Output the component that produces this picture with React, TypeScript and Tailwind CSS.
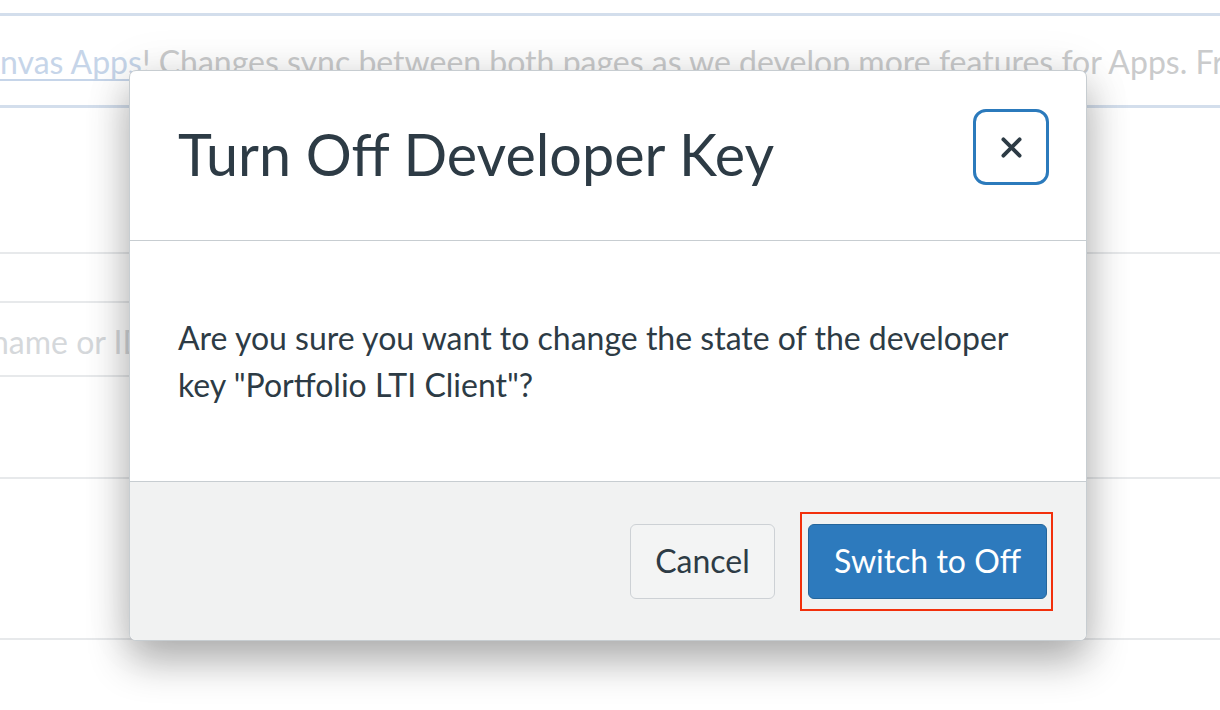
import React from 'react';

function CloseIcon() {
  return (
    <svg width="21" height="21" viewBox="0 0 22 22" fill="none" aria-hidden="true">
      <path d="M2.5 2.5 L19.5 19.5 M19.5 2.5 L2.5 19.5" stroke="#2d3b45" strokeWidth="4" strokeLinecap="round" />
    </svg>
  );
}

export default function App() {
  return (
    <div className="relative h-[710px] w-[1220px] overflow-hidden bg-white font-['Lato','Noto_Sans',sans-serif]">
      {/* faded page behind the dialog */}
      <div className="pt-[13px]">
        <div className="h-[3px] bg-[#d3deec]" />
        <div className="h-[89px] whitespace-nowrap pt-[26px] text-[32px] leading-[40px] text-[#cacbcc]">
          <span className="text-[#c6d5e9] underline decoration-2 underline-offset-[5px]">nvas Apps</span>
          ! Changes sync between both pages as we develop more features for Apps. From
        </div>
        <div className="h-[3px] bg-[#d3deec]" />
        <div className="h-[144px]" />
        <div className="h-[2px] bg-[#e7e9eb]" />
        <div className="h-[47px]" />
        <div className="flex h-[76px] w-[160px] items-center overflow-hidden border-y-2 border-[#e7e9eb]">
          <span className="-ml-[9px] whitespace-nowrap pt-[6px] text-[32px] text-[#d5d8db]">name or ID</span>
        </div>
        <div className="h-[100px]" />
        <div className="h-[2px] bg-[#e7e9eb]" />
        <div className="h-[159px]" />
        <div className="h-[2px] bg-[#e7e9eb]" />
      </div>

      {/* dialog */}
      <div className="absolute left-[129px] top-[70px] w-[958px] rounded-[7px] border border-[#c7cdd1] bg-white shadow-[0_20px_40px_rgba(0,0,0,0.3),0_0_50px_rgba(0,0,0,0.08)]">
        <div className="flex h-[170px] items-start justify-between border-b border-[#c7cdd1] pl-[48px] pr-[37px]">
          <h1 className="self-center pb-[4px] text-[57.5px] font-normal leading-[1.2] text-[#2d3b45]">
            Turn Off Developer Key
          </h1>
          <button className="mt-[38px] flex h-[76px] w-[76px] items-center justify-center rounded-[13px] border-[3px] border-[#2b7abc] bg-white">
            <CloseIcon />
          </button>
        </div>

        <div className="flex h-[241px] items-center border-b border-[#c7cdd1] px-[48px]">
          <p className="text-[32px] leading-[47px] text-[#2d3b45]">
            Are you sure you want to change the state of the developer key "Portfolio LTI Client"?
          </p>
        </div>

        <div className="flex h-[158px] items-center justify-end gap-[33px] rounded-b-[7px] bg-[#f1f2f2] pr-[39px]">
          <button className="h-[75px] w-[145px] rounded-[6px] border border-[#cdd1d5] bg-[#f3f4f4] text-[32px] text-[#2d3b45]">
            Cancel
          </button>
          <div className="relative">
            <button className="h-[75px] w-[239px] rounded-[6px] border border-[#24659b] bg-[#2d7abd] text-[32px] text-white">
              Switch to Off
            </button>
            <div className="pointer-events-none absolute -bottom-[12px] -left-[8px] -right-[6px] -top-[12px] border-2 border-[#f2300c]" />
          </div>
        </div>
      </div>
    </div>
  );
}
